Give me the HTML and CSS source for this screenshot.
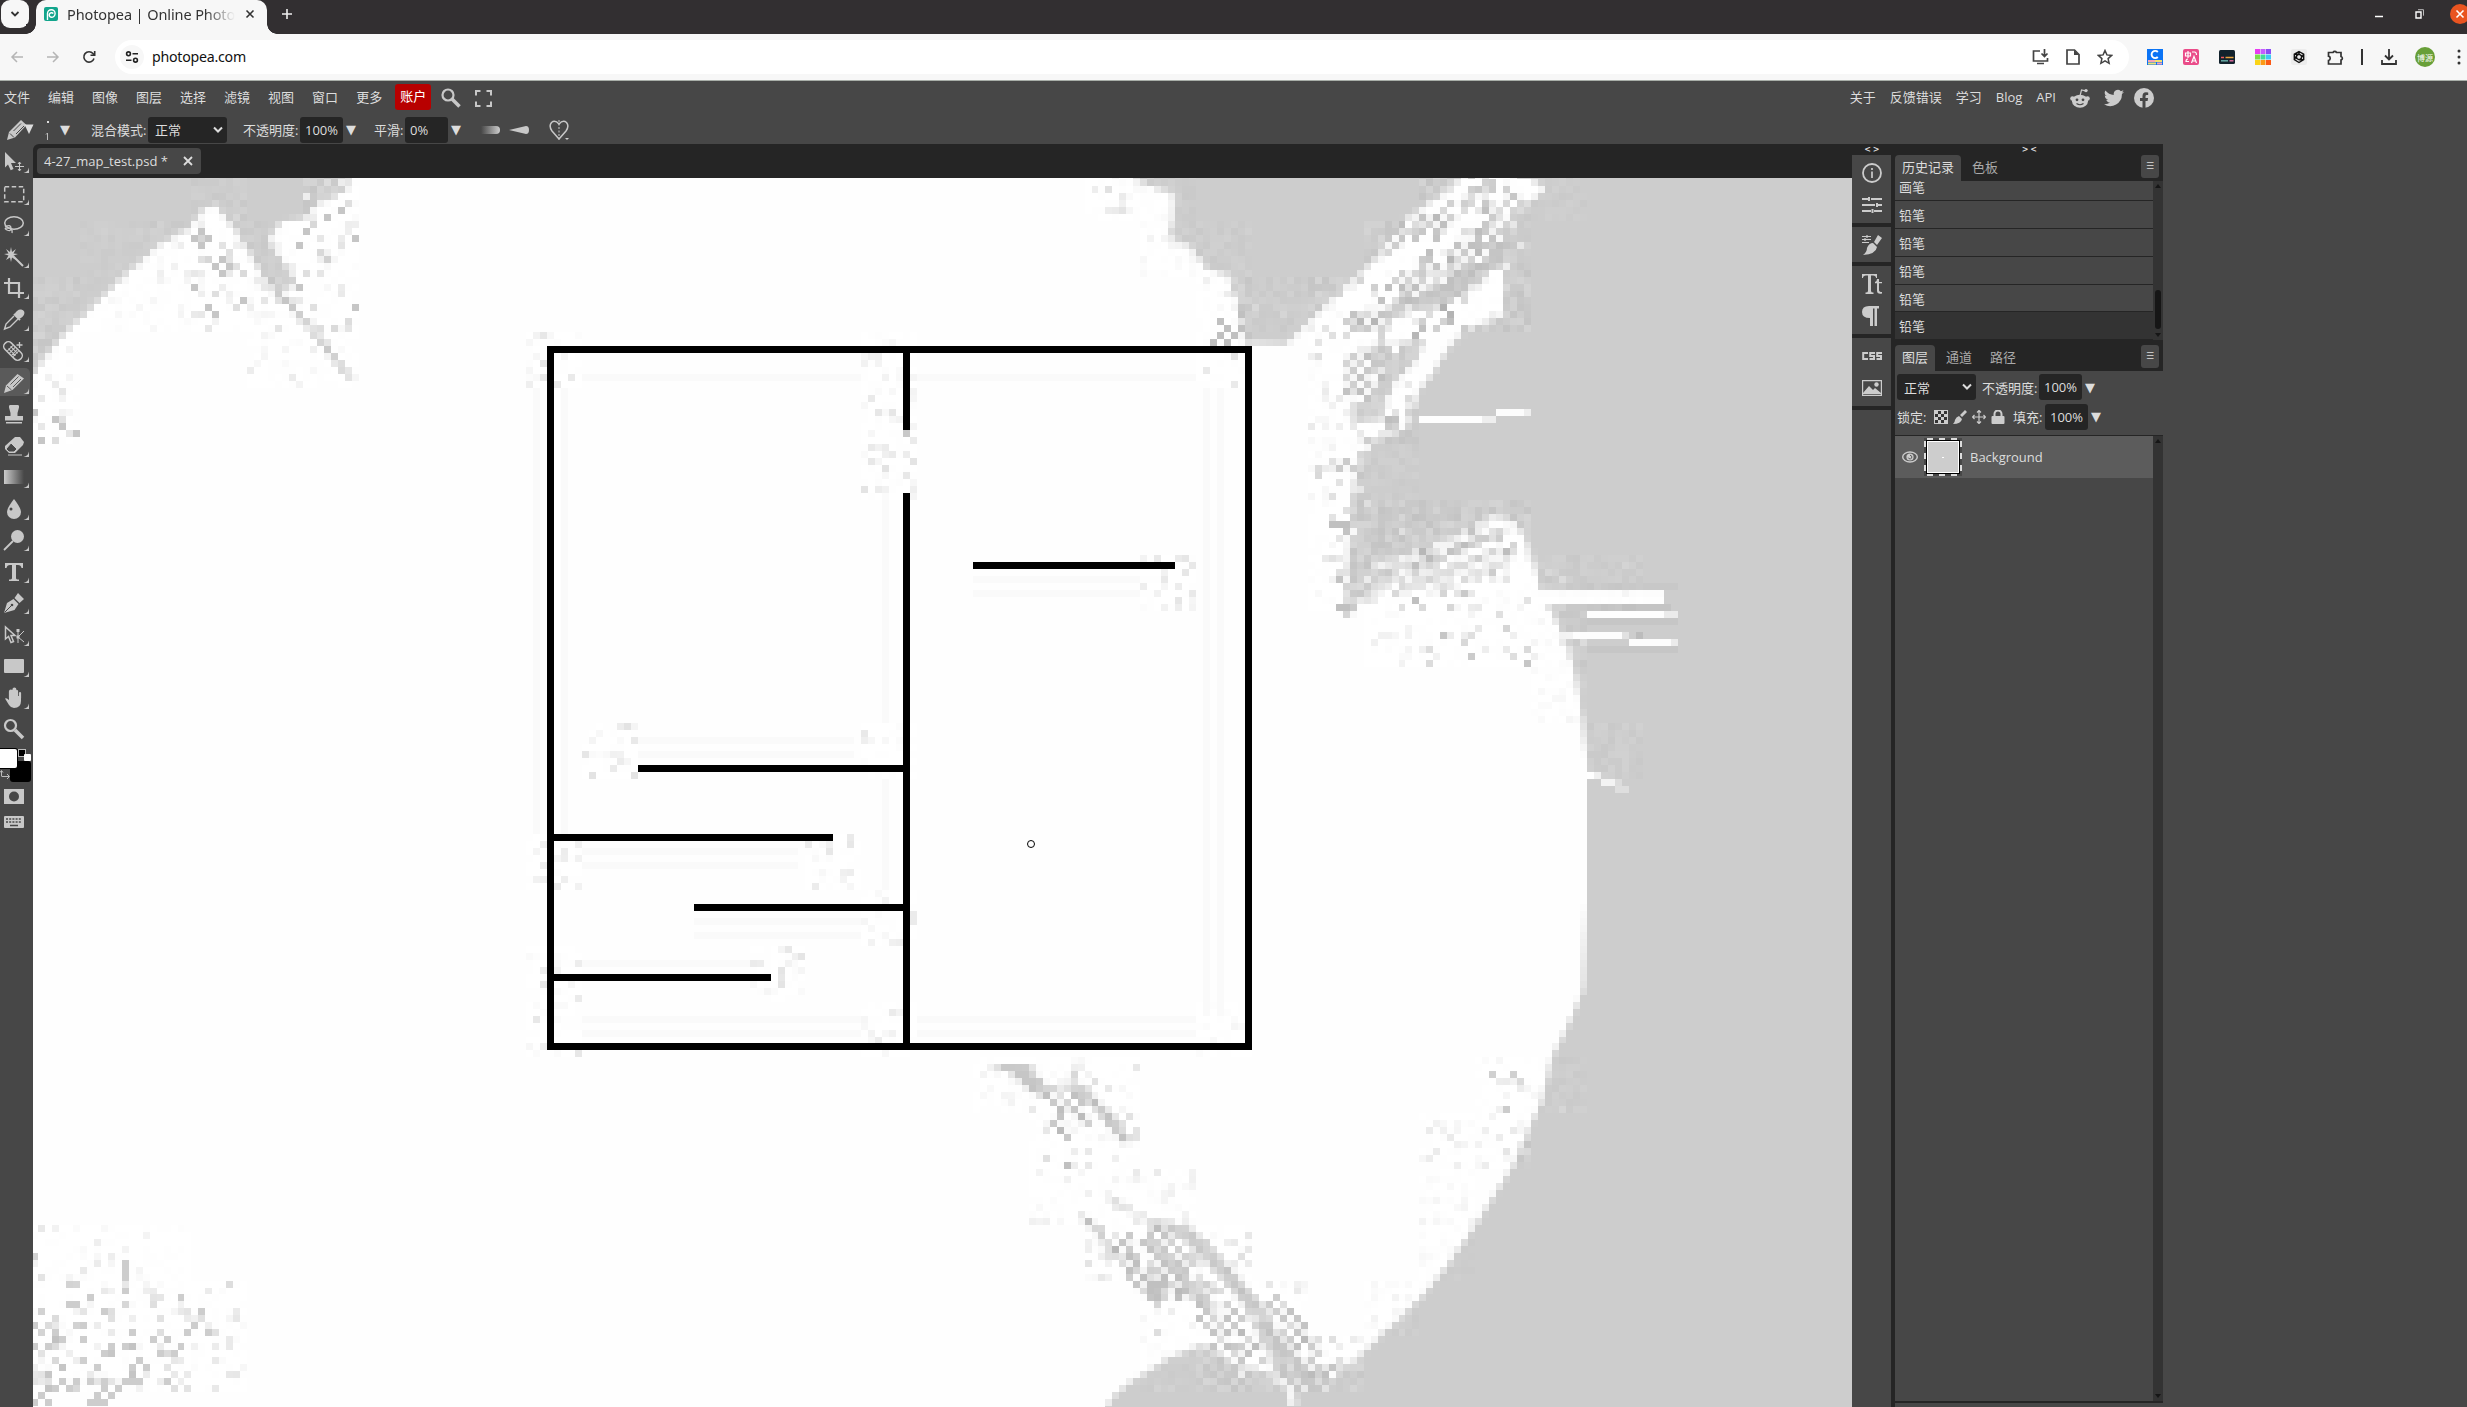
FILE: index.html
```html
<!DOCTYPE html>
<html lang="zh">
<head>
<meta charset="utf-8">
<title>Photopea | Online Photo Editor</title>
<link rel="stylesheet" href="styles.css">
</head>
<body>
<header class="tabstrip">
  <div class="tabsearch"><svg width="10" height="8" viewBox="0 0 10 8"><path d="M1.5 2l3.5 3.5L8.500 2" fill="none" stroke="#333" stroke-width="1.8"/></svg></div>
  <div class="browsertab">
    <svg class="favicon" width="14" height="14" viewBox="0 0 14 14"><rect width="14" height="14" rx="2" fill="#12a58c"/><path d="M3.500 13V6.500a3.800 3.800 0 1 1 3.800 3.800 2.300 2.300 0 1 1 2-3.800" fill="none" stroke="#fff" stroke-width="1.400"/></svg>
    <span class="tabtitle">Photopea | Online Photo Editor</span>
    <svg width="10" height="10" viewBox="0 0 10 10"><path d="M1.500 1.500l7 7M8.500 1.500l-7 7" stroke="#333" stroke-width="1.600"/></svg>
  </div>
  <svg class="newtab" width="12" height="12" viewBox="0 0 12 12"><path d="M6 1v10M1 6h10" stroke="#eee" stroke-width="1.600"/></svg>
  <div class="winbtns">
    <svg width="8" height="16" viewBox="0 0 8 16"><path d="M0 10.500h8" stroke="#fff" stroke-width="1.500"/></svg>
    <svg width="10" height="10" viewBox="0 0 10 10"><path d="M1 3h5v6H1z" fill="none" stroke="#fff" stroke-width="1.400"/><path d="M3 .7h5.500v6" fill="none" stroke="#bbb"/></svg>
    <span class="close"><svg width="20" height="20" viewBox="0 0 20 20"><circle cx="10" cy="10" r="10" fill="#e95420"/><path d="M6.500 6.500l7 7m0-7l-7 7" stroke="#fff" stroke-width="1.600"/></svg></span>
  </div>
</header>
<div class="toolbar">
  <svg width="14" height="14" viewBox="0 0 14 14"><path d="M13 7H2M7 2L2 7l5 5" fill="none" stroke="#b5b5b5" stroke-width="1.500"/></svg>
  <svg width="14" height="14" viewBox="0 0 14 14"><path d="M1 7h11M7 2l5 5-5 5" fill="none" stroke="#b5b5b5" stroke-width="1.500"/></svg>
  <svg width="14" height="14" viewBox="0 0 14 14"><path d="M12 8.500A5.200 5.200 0 1 1 11 3.500l1.500 1.500M12.700 1v4.300H8.500" fill="none" stroke="#333" stroke-width="1.600"/></svg>
  <div class="omnibox">
    <span class="site"><svg width="14" height="14" viewBox="0 0 14 14"><g fill="none" stroke="#222" stroke-width="1.600"><circle cx="3.500" cy="3.800" r="1.900"/><path d="M7.500 3.800H13M1 10.200h5.500"/><circle cx="10.500" cy="10.200" r="1.900"/></g></svg></span>
    <span class="url">photopea.com</span>
    <div class="omniactions">
      <svg width="17" height="16" viewBox="0 0 17 16"><path d="M8 2H1.500v10h14V9M5 14.500h7M12.500 0v7M9.500 4.500l3 3 3-3" fill="none" stroke="#444" stroke-width="1.700"/></svg>
      <svg width="14" height="16" viewBox="0 0 14 16"><path d="M1 1h7.500L13 5.500V15H1z" fill="none" stroke="#444" stroke-width="1.700"/><path d="M8 1v5h5z" fill="#444"/></svg>
      <svg width="16" height="16" viewBox="0 0 16 16"><path d="M8 1.500l1.900 4.400 4.800.5-3.600 3.200 1 4.700L8 11.800l-4.100 2.500 1-4.700L1.300 6.400l4.800-.5z" fill="none" stroke="#444" stroke-width="1.500"/></svg>
    </div>
  </div>
  <div class="exts">
    <svg width="16" height="16" viewBox="0 0 16 16"><rect width="16" height="16" fill="#0b74f5"/><path d="M10.800 3A3.600 3.600 0 1 0 10.800 8" fill="none" stroke="#fff" stroke-width="1.900"/><path d="M1 12h7M10 14.500h5" stroke="#f7a3b5" stroke-width="2"/><path d="M8 12h7M1 14.500h8" stroke="#f0e070" stroke-width="2"/></svg>
    <svg width="16" height="16" viewBox="0 0 16 16"><rect width="16" height="16" rx="2" fill="#ea4c89"/><path d="M2.500 4h5v3h-5zM5 2v7M9 3h2.500q2 0 2 3M5 10q-2 0-2 2.500h3M8.500 14l2.500-6.500L13.500 14M9.500 12h3" fill="none" stroke="#fff" stroke-width="1.200"/></svg>
    <svg width="16" height="16" viewBox="0 0 16 16"><rect y="1" width="16" height="14" rx="1.500" fill="#12222c"/><path d="M2 8.500h3" stroke="#ef5a5a" stroke-width="1.500"/><path d="M6.500 8.500h8" stroke="#e8a33d" stroke-width="1.500"/><path d="M2 11.800h7" stroke="#66a9a4" stroke-width="1.500"/><path d="M10.500 11.800h4" stroke="#d86a9c" stroke-width="1.500"/></svg>
    <svg width="16" height="16" viewBox="0 0 16 16"><path fill="#e83cf0" d="M0 0h5v5H0z"/><path fill="#c45cff" d="M5.500 0h5v5h-5z"/><path fill="#8a4cf5" d="M11 0h5v5h-5z"/><path fill="#7be04a" d="M0 5.500h5v5H0z"/><path fill="#3fdc9a" d="M5.500 5.500h5v5h-5z"/><path fill="#3fc8f5" d="M11 5.500h5v5h-5z"/><path fill="#fbd416" d="M0 11h5v5H0z"/><path fill="#fb9a16" d="M5.500 11h5v5h-5z"/><path fill="#fb5a16" d="M11 11h5v5h-5z"/></svg>
    <svg width="16" height="16" viewBox="0 0 16 16"><rect width="16" height="16" rx="2" fill="#ececec"/><path d="M8 2.500l4.700 2.700v5.500L8 13.500l-4.700-2.800V5.200zM8 5.200l2.400 1.400v2.800L8 10.800 5.600 9.400V6.600zM8 2.500v3M12.700 5.200L10 9.500M12.700 10.700H8M3.300 5.200H8M3.300 10.700l2.400-4" fill="none" stroke="#111" stroke-width="1.400"/></svg>
    <svg width="17" height="17" viewBox="0 0 17 17"><path d="M1.500 3.500H6a2 2 0 0 1 3.500 0H14V7.500a1.800 1.800 0 0 1 0 3.500V15H1.500v-3.500a2.200 2.200 0 0 0 0-4.300z" fill="none" stroke="#333" stroke-width="1.700"/></svg>
    <i class="bar"></i>
    <svg width="16" height="16" viewBox="0 0 16 16"><path d="M8 0v10M4 6.500l4 4 4-4M1 11v4h14v-4" fill="none" stroke="#333" stroke-width="1.800"/></svg>
    <span class="avatar">博源</span>
    <svg width="4" height="16" viewBox="0 0 4 16"><g fill="#333"><circle cx="2" cy="2" r="1.500"/><circle cx="2" cy="8" r="1.500"/><circle cx="2" cy="14" r="1.500"/></g></svg>
  </div>
</div>
<main class="app">
  <div class="shell">
    <nav class="menubar">
      <div class="menus"><span>文件</span><span>编辑</span><span>图像</span><span>图层</span><span>选择</span><span>滤镜</span><span>视图</span><span>窗口</span><span>更多</span></div>
      <span class="account">账户</span>
      <svg class="msearch" width="20" height="20" viewBox="0 0 20 20"><circle cx="7" cy="7" r="5.500" fill="none" stroke="#c8c8c8" stroke-width="2.200"/><path d="M11 11l7.500 7.500" stroke="#c8c8c8" stroke-width="3.500"/></svg>
      <svg class="mfull" width="17" height="17" viewBox="0 0 17 17"><path d="M1 5.500V1h4.500M11.500 1H16v4.500M16 11.500V16h-4.500M5.500 16H1v-4.500" fill="none" stroke="#c8c8c8" stroke-width="2"/></svg>
      <div class="links"><span>关于</span><span>反馈错误</span><span>学习</span><span>Blog</span><span>API</span>
        <svg class="reddit" width="20" height="20" viewBox="0 0 20 20"><path d="M10 8l1.500-6 4 .8" fill="none" stroke="#ccc" stroke-width="1.200"/><circle cx="16" cy="2.600" r="1.700" fill="#ccc"/><circle cx="2.500" cy="10.500" r="2.300" fill="#ccc"/><circle cx="17.500" cy="10.500" r="2.300" fill="#ccc"/><ellipse cx="10" cy="13.200" rx="8" ry="6.500" fill="#ccc"/><circle cx="7" cy="11.800" r="1.400" fill="#474747"/><circle cx="13" cy="11.800" r="1.400" fill="#474747"/><path d="M6.500 15.500q3.500 2.500 7 0" stroke="#474747" stroke-width="1.200" fill="none"/></svg>
        <svg width="20" height="20" viewBox="0 0 24 24"><path fill="#ccc" d="M24 4.600a10 10 0 0 1-2.800.8 5 5 0 0 0 2.100-2.700c-1 .5-2 1-3.100 1.200a4.900 4.900 0 0 0-8.400 4.500A14 14 0 0 1 1.700 3.100a4.900 4.900 0 0 0 1.500 6.600 5 5 0 0 1-2.200-.6 4.900 4.900 0 0 0 3.900 4.800 5 5 0 0 1-2.200.1 4.900 4.900 0 0 0 4.600 3.400A10 10 0 0 1 0 19.500a14 14 0 0 0 21.500-12.400A10 10 0 0 0 24 4.600z"/></svg>
        <svg class="fb" width="20" height="20" viewBox="0 0 20 20"><circle cx="10" cy="10" r="10" fill="#ccc"/><path d="M8.500 20v-7H6v-3h2.500V8q0-3.800 3.500-3.800l2.200.2V7h-1.400q-1.300 0-1.300 1.400V10h2.600l-.5 3h-2.100v7z" fill="#474747"/></svg>
      </div>
    </nav>
    <div class="options">
      <svg class="optpen" width="26" height="20" viewBox="0 0 26 20"><path d="M0 20l2-8L14 0l5.500 5L8 17.500z" fill="#c8c8c8"/><path d="M3 13.500l4 4M6.500 11L14 3.500M9 14L17 6" stroke="#474747"/><path d="M17.500 4.500H26.500L22 14z" fill="#ddd"/></svg>
      <svg class="optsize" width="10" height="20" viewBox="0 0 10 20"><rect x="4" y="1" width="2" height="2" fill="#ddd"/><path d="M3 14.500l1.500-1.500v7" stroke="#bbb" fill="none"/></svg>
      <span class="dd d1">▼</span>
      <span class="lbl l1">混合模式:</span><span class="sel">正常<svg width="10" height="8" viewBox="0 0 10 8"><path d="M1 1.500l4 4 4-4" fill="none" stroke="#ddd" stroke-width="2"/></svg></span>
      <span class="lbl l2">不透明度:</span><span class="inp">100%</span><span class="dd">▼</span>
      <span class="lbl l3">平滑:</span><span class="inp">0%</span><span class="dd">▼</span>
      <i class="fade"></i>
      <svg class="wedge" width="20" height="8" viewBox="0 0 20 8"><path d="M0 4L17 0q3 0 3 4t-3 4z" fill="#c8c8c8"/></svg>
      <svg class="heart" width="20" height="20" viewBox="0 0 20 20"><path d="M10 4Q6-.5 2.500 2.500-.5 6 3 11l7 8 7-8q3.500-5 .5-8.500Q14-.5 10 4z" fill="none" stroke="#c8c8c8" stroke-width="1.500"/><path d="M10 0v20" stroke="#c8c8c8" stroke-dasharray="2 1.500"/><path d="M16 18h4l-2 2z" fill="#ccc"/></svg>
    </div>
    <div class="work">
      <aside class="tools">
        <svg class="tool"><path d="M5 0l11 11h-5l2.500 6-2.800 1.200L8 12.500l-3 3z" fill="#c8c8c8"/><path d="M19.500 10v9M15 14.500h9M18 12l1.500-2 1.500 2M18 17l1.500 2 1.500-2" stroke="#c8c8c8" fill="none"/></svg>
        <svg class="tool"><rect x="4.700" y="2.700" width="19" height="15" fill="none" stroke="#c8c8c8" stroke-width="1.500" stroke-dasharray="4.500 2.500"/></svg>
        <svg class="tool"><ellipse cx="14" cy="8" rx="9.300" ry="6.200" fill="none" stroke="#c8c8c8" stroke-width="1.500"/><path d="M5 12q6-3 6 1t-4 2 1-2 4 5" fill="none" stroke="#c8c8c8" stroke-width="1.300"/></svg>
        <svg class="tool"><path d="M13 9l10 10" stroke="#c8c8c8" stroke-width="2"/><path d="M11 0l1 5 4-3-2.500 4.500L18 7l-4.500 1.500L16 13l-4-2.500L11 15l-1-4.500L6 13l2.500-4.500L4 7l4.500-.5L6 2l4 3z" fill="#c8c8c8"/></svg>
        <svg class="tool"><path d="M9 0v15h15M4 5h15v15" fill="none" stroke="#c8c8c8" stroke-width="2.200"/></svg>
        <svg class="tool"><path d="M14 4l6 6M15.500 4.500Q18 0 21 .5q3.500 1 2 4-1 2-4 3.500z" stroke="#c8c8c8" stroke-width="2" fill="#c8c8c8"/><path d="M14 6L6 14l-1.500 5L10 17l8-8" fill="none" stroke="#c8c8c8" stroke-width="1.400"/></svg>
        <svg class="tool"><g transform="rotate(45 13 10)"><rect x="2" y="5.500" width="22" height="9" rx="4" fill="none" stroke="#c8c8c8" stroke-width="1.500"/><path d="M9 6v8M12 6v8M15 6v8M17 6v8M8 8.500h10M8 11.500h10" stroke="#c8c8c8"/></g><path d="M19.500 1v6M16.500 4h6" stroke="#c8c8c8" stroke-width="1.300"/></svg>
        <svg class="tool on"><path d="M4 20l2-7.500L17.500 1 24 5.500 12.500 17z" fill="#c8c8c8"/><path d="M7 13l4.500 4M10.500 11.500l8-8M13 14l8-8" stroke="#5a5a5a"/></svg>
        <svg class="tool plain"><path d="M10 1h8q1.500 0 1 2.500L17.500 9v3H23v4.500H5V12h5.500V9L9 3.500Q8.500 1 10 1zM6 18h16v1.400H6z" fill="#c8c8c8"/></svg>
        <svg class="tool"><path d="M15 1h5l4 5-1 3-8 8H9l-4-4V10z" fill="#c8c8c8"/><path d="M11 7l6 6-3 3H9l-3-3z" fill="#474747" stroke="#c8c8c8"/><path d="M8 19h14" stroke="#c8c8c8"/></svg>
        <svg class="tool"><defs><linearGradient id="g"><stop stop-color="#ccc"/><stop offset="1" stop-color="#474747"/></linearGradient></defs><rect x="4" y="3" width="20" height="14" fill="url(#g)"/></svg>
        <svg class="tool"><path d="M14 0q7 9 7 13a7 7 0 0 1-14 0q0-4 7-13z" fill="#c8c8c8"/><circle cx="11" cy="10" r="1.500" fill="#474747"/></svg>
        <svg class="tool"><circle cx="17.500" cy="6.500" r="6.500" fill="#c8c8c8"/><path d="M13 11l-9 9" stroke="#c8c8c8" stroke-width="1.800"/></svg>
        <svg class="tool"><path d="M5 1h18v5h-1.500Q21 3 18 3h-2v13q0 1.500 3 1.500V19H9v-1.500q3 0 3-1.500V3h-2Q7 3 6.500 6H5z" fill="#c8c8c8"/></svg>
        <svg class="tool"><path d="M18 0l6 6-4.500 4L14.500 5zM13.500 6l5 5-4 6L4 20l3-10z" fill="#c8c8c8"/><path d="M4.500 19.500l7-7" stroke="#474747"/><circle cx="12" cy="12" r="1.300" fill="#474747"/></svg>
        <svg class="tool"><path d="M5.500 2v12l3-2.500 2.500 6 2.500-1-2.500-6h4z" fill="none" stroke="#c8c8c8" stroke-width="1.500"/><path d="M18 5v13M18 12l6-6M18 12l6 5" stroke="#c8c8c8"/><path d="M16.500 4h3v3h-3zM16.500 10.500h3v3h-3z" fill="#c8c8c8"/></svg>
        <svg class="tool"><rect x="4" y="3" width="20" height="14" rx="1" fill="#c8c8c8"/></svg>
        <svg class="tool"><path d="M10 10V3.500q0-1 .9-1t.9 1V9M13.500 9V1.500q0-1 .9-1t.9 1V9M17 9V3M20 10V5" stroke="#c8c8c8" stroke-width="2.200" stroke-linecap="round"/><path d="M9 8h12v5q0 7-7 7-3 0-5-3l-4-6.500q1.500-1.200 4 1.500z" fill="#c8c8c8"/></svg>
        <svg class="tool plain"><circle cx="10.500" cy="6.500" r="5.500" fill="none" stroke="#c8c8c8" stroke-width="2.200"/><path d="M15 11l8 8" stroke="#c8c8c8" stroke-width="3.500"/></svg>
        <svg class="colors" width="33" height="38" viewBox="0 0 33 38"><rect x="10" y="15" width="21" height="21" rx="3"/><rect x="-4" y="2" width="22" height="21" rx="3"/><rect x="-3" y="3" width="20" height="19" rx="2" fill="#fff"/><rect x="18.500" y="3.500" width="7" height="7" stroke="#bbb"/><rect x="24" y="8" width="7" height="7" rx="1" fill="#fff"/><path d="M1.500 30v-5M0 26.500l1.500-2 1.500 2M1.500 30.500H9M7 28l2.500 2.500L7 33" stroke="#bbb" fill="none"/></svg>
        <svg class="mask" width="20" height="15" viewBox="0 0 20 15"><rect width="20" height="15" fill="#c8c8c8"/><circle cx="10" cy="7.500" r="5" fill="#474747"/></svg>
        <svg class="keys" width="20" height="12" viewBox="0 0 20 12"><rect width="20" height="12" rx="1" fill="#c8c8c8"/><path d="M2 3h16M2 6h16" stroke="#474747" stroke-width="1.600" stroke-dasharray="2 1.200"/><path d="M6 9.500h8" stroke="#474747" stroke-width="1.500"/></svg>
      </aside>
      <section class="doc">
        <div class="doctabs"><span class="doctab">4-27_map_test.psd *<svg width="10" height="10" viewBox="0 0 10 10"><path d="M1 1l8 8M9 1L1 9" stroke="#ddd" stroke-width="1.800"/></svg></span></div>
        <div class="view"><canvas id="map" width="262" height="178"></canvas><i class="brush"></i></div>
      </section>
      <aside class="strip">
        <div class="collapse">&lt;&nbsp;&gt;</div>
        <div class="group"><svg viewBox="0 0 20 20"><circle cx="10" cy="10" r="9" fill="none" stroke="#ccc" stroke-width="1.800"/><path d="M10 8.500V15M10 5v2" stroke="#ccc" stroke-width="1.700"/></svg><svg viewBox="0 0 20 20"><path d="M0 4h6M9 4h11M0 10h13M16 10h4M0 16h9M12 16h8" stroke="#ccc" stroke-width="2"/><path d="M7 2v4M15 8v4M10.500 14v4" stroke="#ccc" stroke-width="2"/></svg></div>
        <div class="group one"><svg viewBox="0 0 20 20"><path d="M0 1.500h9M0 4.500h9M0 7.500h7M5 0v3M3 3v3" stroke="#ccc" stroke-width="1.200"/><path d="M16 0l4 3-5 7-3-3zM11 8l4 4q-1 7-14 8 4-3 4-7 2-5 6-5z" fill="#ccc"/></svg></div>
        <div class="group"><svg viewBox="0 0 20 20"><path d="M0 0h15v4h-1q0-2.500-3-2.500H9V17q0 1.500 2.500 1.500V20h-8v-1.500Q6 18.500 6 17V1.500H4Q1 1.500 1 4H0zM15 5h2v3h3v1.200h-3V16q0 2 3 2v1.500q-5 1-5-3V9.200h-2V8q2-.5 2-3z" fill="#ccc"/></svg><svg viewBox="0 0 20 20"><path d="M7 0h10v2.500h-2V20h-2.500V2.500H11V20H8v-8Q0 12 0 6t7-6z" fill="#ccc"/></svg></div>
        <div class="group"><svg viewBox="0 0 20 20"><path d="M6 7H1.200v6H6M13 7H8.200v3H12v3H7.500M20 7h-4.800v3H19v3h-4.500" fill="none" stroke="#ccc" stroke-width="2"/></svg><svg viewBox="0 0 20 20"><path d="M.6 2.600h18.800v14.800H.6z" fill="none" stroke="#ccc" stroke-width="1.200"/><path d="M1 15l6-7 4 4 2-2 6 5v1H1z" fill="#ccc"/><circle cx="14.500" cy="6.500" r="2.200" fill="#ccc"/></svg></div>
        <div class="group rest"></div>
      </aside>
      <aside class="panels">
        <div class="collapse">&gt;&nbsp;&lt;</div>
        <div class="ptabs"><span class="ptab act">历史记录</span><span class="ptab">色板</span><i class="burger">☰</i></div>
        <div class="history">
          <ul><li>画笔</li><li>铅笔</li><li>铅笔</li><li>铅笔</li><li>铅笔</li><li class="cur">铅笔</li></ul>
          <div class="sb"><b class="up"></b><b class="thumb"></b><b class="down"></b></div>
        </div>
        <div class="ptabs second"><span class="ptab act">图层</span><span class="ptab">通道</span><span class="ptab">路径</span><i class="burger">☰</i></div>
        <div class="lrow"><span class="sel">正常<svg width="10" height="8" viewBox="0 0 10 8"><path d="M1 1.500l4 4 4-4" fill="none" stroke="#ddd" stroke-width="2"/></svg></span><span class="lbl">不透明度:</span><span class="inp">100%</span><span class="dd">▼</span></div>
        <div class="lrow locks"><span class="lbl">锁定:</span>
          <svg width="14" height="14" viewBox="0 0 14 14"><path d="M0 0h14v14H0z" fill="#ccc"/><path d="M4 1h3v3H4zM10 1h3v3h-3zM1 4h3v3H1zM7 4h3v3H7zM4 7h3v3H4zM10 7h3v3h-3zM1 10h3v3H1zM7 10h3v3H7z" fill="#333"/></svg>
          <svg width="14" height="14" viewBox="0 0 14 14"><path d="M12 0l2 2-5 5-2-2zM6 6l3 3q-1 5-9 5 2-2 2-4 1-3 4-4z" fill="#ccc"/></svg>
          <svg width="14" height="14" viewBox="0 0 14 14"><path d="M7 1v12M1 7h12M5 2.500L7 .5l2 2M5 11.500l2 2 2-2M2.500 5L.5 7l2 2M11.500 5l2 2-2 2" fill="none" stroke="#ccc" stroke-width="1.200"/></svg>
          <svg width="14" height="14" viewBox="0 0 14 14"><path d="M3.500 7V4a3.500 3.500 0 0 1 7 0v3" fill="none" stroke="#ccc" stroke-width="2"/><rect x=".5" y="6" width="13" height="8" rx="1" fill="#ccc"/></svg>
          <span class="lbl fill">填充:</span><span class="inp">100%</span><span class="dd">▼</span></div>
        <div class="layers">
          <div class="llist"><div class="layer">
            <svg width="16" height="12" viewBox="0 0 16 12"><ellipse cx="8" cy="6" rx="7.300" ry="5" fill="none" stroke="#ccc" stroke-width="1.400"/><circle cx="8" cy="6" r="3.600" fill="#ccc"/><path d="M8 4.300a1.800 1.800 0 1 1-1.700 2.300" fill="none" stroke="#5c5c5c"/></svg>
            <span class="thumbwrap"><i></i></span><span>Background</span></div></div>
          <div class="sb"><b class="up"></b><b class="down"></b></div>
        </div>
        <div class="pfoot"></div>
      </aside>
    </div>
  </div>
</main>
<script src="map.js"></script>
</body>
</html>
```
FILE: styles.css
```css
*{box-sizing:border-box}
body{margin:0;height:1407px;overflow:hidden;display:flex;flex-direction:column;background:#474747;font:13px "Open Sans","Noto Sans CJK SC",sans-serif;color:#ddd}
svg{display:block;flex:none}
i{font-style:normal}
.tabstrip{height:34px;background:#322f31;display:flex;align-items:flex-start;flex:none}
.tabsearch{width:28px;height:28px;margin-left:1px;background:#f7f7f7;border-radius:9px;display:flex;align-items:center;justify-content:center}
.browsertab{margin-left:7px;width:231px;height:34px;background:#f7f7f7;border-radius:10px 10px 0 0;display:flex;align-items:center;padding:0 10px 6px 8px;position:relative}
.browsertab::before,.browsertab::after{content:"";position:absolute;bottom:0;width:10px;height:10px}
.browsertab::before{left:-10px;background:radial-gradient(circle at 0 0,#322f31 9.5px,#f7f7f7 10px)}
.browsertab::after{right:-10px;background:radial-gradient(circle at 100% 0,#322f31 9.5px,#f7f7f7 10px)}
.tabtitle{margin:-1px 10px 0 9px;width:168px;font:14.500px "Noto Sans",sans-serif;letter-spacing:-.1px;color:#333;white-space:nowrap;overflow:hidden;mask-image:linear-gradient(90deg,#000 82%,transparent)}
.newtab{margin:8px 0 0 14px}
.winbtns{margin-left:auto;display:flex;align-items:center;height:28px}
.winbtns>:nth-child(2){margin-left:32px}
.close{margin-left:25px;width:17px;overflow:hidden}
.toolbar{height:47px;flex:none;background:#f7f7f7;border-bottom:1px solid #a9afa9;display:flex;align-items:center;padding:0 4px 0 10px}
.toolbar>svg{margin-right:22px}
.omnibox{margin-left:-3px;width:2014px;height:34px;border-radius:17px;background:#fff;display:flex;align-items:center;padding:0 16px 0 5px}
.site{width:24px;height:24px;border-radius:12px;background:#f7f7f7;display:grid;place-items:center}
.url{margin:-2px 0 0 8px;font:14.200px "Noto Sans",sans-serif;letter-spacing:-.25px;color:#111}
.omniactions{margin-left:auto;display:flex;gap:17px;align-items:center}
.exts{display:flex;align-items:center;gap:20px;margin-left:18px}
.exts .bar{width:2px;height:16px;background:#333;margin:0 -2px 0 -3px}
.avatar{width:20px;height:20px;border-radius:10px;background:#689f38;color:#fff;font-size:8px;display:grid;place-items:center;margin:0 2px 0 -2px}
.app{flex:1;min-height:0;display:flex}
.shell{width:2163px;display:flex;flex-direction:column}
.menubar{height:34px;display:flex;align-items:center;padding-left:4px;flex:none}
.menus{display:flex;gap:18px;margin-top:-2px}
.menubar span{line-height:20px}
.account{margin:-2px 0 0 13px;width:36px;height:26px;line-height:25px!important;text-align:center;background:#b80000;border-radius:3px;color:#fff}
.msearch{margin-left:10px}
.mfull{margin-left:14px}
.links{margin-left:auto;display:flex;align-items:center;gap:14px;padding-right:9px}
.links span{margin-top:-2px}
.fb{margin-left:-4px}
.options{height:29px;display:flex;align-items:center;padding-left:7px;flex:none}
.optpen{overflow:visible}
.optsize{margin-left:10px}
.lbl{white-space:nowrap}
.dd{font:13px "DejaVu Sans",sans-serif;color:#ddd;width:10px;margin-left:3px}
.d1{margin-left:7px}
.l1{margin-left:21px;width:57px}
.sel{width:79px;height:26px;background:#252525;border-radius:3px;display:flex;align-items:center;justify-content:space-between;padding:0 4px 0 7px}
.l2{margin-left:16px;width:57px}
.l3{margin-left:18px;width:31px}
.inp{width:43px;height:26px;background:#252525;border-radius:3px;line-height:26px;padding-left:5px}
.fade{width:19px;height:8px;margin-left:20px;border-radius:0 4px 4px 0;background:linear-gradient(90deg,#474747,#ccc)}
.wedge{margin-left:9px}
.heart{margin-left:20px}
.work{flex:1;display:flex;min-height:0}
.tools{width:33px;background:#474747;padding-top:3px}
.tool{width:30px;height:28px;margin-bottom:3.500px;padding:5px 0 0;overflow:visible}
.tool.on{background:#5a5a5a;border-radius:0 5px 5px 0}
.colors{margin-top:1px}
.mask{margin:5px 0 0 4px}
.keys{margin:12px 0 0 4px}
.doc{width:1819px;display:flex;flex-direction:column}
.doctabs{height:34px;flex:none;background:#252525;padding:4px;border-radius:6px 0 0 0}
.doctab{display:flex;width:164px;height:26px;background:#474747;border-radius:4px;align-items:center;justify-content:space-between;padding:0 8px 1px 7px}
.view{flex:1;position:relative;overflow:hidden;background:#fff}
.view canvas{position:absolute;left:-2px;top:-6.500px;width:1827.700px;height:1241.700px;image-rendering:pixelated}
.brush{position:absolute;left:994px;top:662px;width:8px;height:8px;border:1px solid #000;border-radius:50%}
.strip{width:43px;background:#252525;display:flex;flex-direction:column;gap:4px;padding-right:4px}
.collapse{height:11px;font:bold 8px/11px "DejaVu Sans",sans-serif;text-align:center;color:#ddd;letter-spacing:-.5px}
.strip .collapse{margin-bottom:-4px}
.group{background:#474747;height:68px;display:flex;flex-direction:column;align-items:center;justify-content:space-around;padding:2px 0}
.group svg{width:20px;height:20px}
.one{height:35px}
.rest{flex:1;height:auto}
.panels{width:268px;display:flex;flex-direction:column}
.panels .collapse{background:#252525;flex:none}
.ptabs{height:26px;flex:none;background:#252525;display:flex;align-items:center}
.ptab{height:26px;line-height:24px;padding:0 7px;margin-right:4px;color:#aaa}
.act{background:#474747;color:#ddd;border-radius:4px 4px 0 0}
.burger{margin:-3px 4px 0 auto;width:18px;height:23px;border-radius:3px;background:#474747;text-align:center;font:9px/23px "DejaVu Sans",sans-serif}
.history{height:159px;flex:none;display:flex;overflow:hidden}
.history ul{margin:-8px 0 0;padding:0;list-style:none;width:258px}
.history li{height:27.900px;border-bottom:1px solid #252525;padding-left:4px;line-height:29px}
.cur{background:#333}
.sb{width:10px;background:#333;display:flex;flex-direction:column;align-items:center;padding:3px 0}
.up{border:3px solid transparent;border-top:0;border-bottom:4px solid #161616}
.down{border:3px solid transparent;border-bottom:0;border-top:4px solid #161616;margin-top:auto}
.thumb{width:6px;height:39px;background:#161616;border-radius:3px;margin-top:102px}
.second{height:31px;padding-top:5px}
.lrow{height:29px;flex:none;display:flex;align-items:center;padding:3px 0 0 2px}
.lrow .lbl{margin-left:6px;width:57px}
.lrow .dd{margin-left:3px}
.locks{height:35px;padding-bottom:5px}
.locks .lbl{margin-left:0;width:37px}
.locks svg{margin-right:5px}
.locks .fill{width:32px;margin-left:3px}
.layers{flex:1;min-height:0;display:flex;border-top:1px solid #252525}
.llist{width:258px}
.layer{height:42px;background:#5c5c5c;display:flex;align-items:center;padding-left:7px}
.thumbwrap{width:38px;height:38px;margin:0 8px 0 6px;background:repeating-conic-gradient(#ddd 0 25%,#474747 0 50%) 3px 3px/12px 12px;display:grid;place-items:center}
.thumbwrap i{width:34px;height:34px;border:1px solid #000;background:linear-gradient(#fff,#fff) 50% 50%/2px 1px no-repeat #cdcdcd;box-shadow:inset 0 0 0 1px #fff}
.pfoot{height:6px;border-top:2px solid #252525}
```
FILE: map.js
```js
// Low resolution floor map, magnified by the editor's zoom level.
const cv = document.getElementById('map');
const c = cv.getContext('2d');
const S = 6.976, OX = 30.4, OY = 171.8;
const GREY = '#cdcdcd', WHITE = '#fefefe';
c.fillStyle = WHITE;
c.fillRect(0, 0, 262, 178);
const cx = x => (x - OX) / S, cy = y => (y - OY) / S;
function trace(p) {
  c.beginPath();
  for (let i = 0; i < p.length; i += 2) c.lineTo(cx(p[i]), cy(p[i + 1]));
}
function poly(col, p) { c.fillStyle = col; trace(p); c.fill(); }
function line(col, w, p) { c.strokeStyle = col; c.lineWidth = w; trace(p); c.stroke(); }
let seed = 77;
const rnd = () => (seed = (seed * 16807) % 2147483647) / 2147483647;
// dithered strip: alternating cells along a polyline, n cells wide
function dither(n, x0, y0, x1, y1, odd = 0) {
  const a = cx(x0), b = cy(y0), e = cx(x1), f = cy(y1), len = Math.hypot(e - a, f - b);
  for (let y = Math.floor(Math.min(b, f)) - n; y <= Math.max(b, f) + n; y++)
    for (let x = Math.floor(Math.min(a, e)) - n; x <= Math.max(a, e) + n; x++) {
      const t = ((x - a) * (e - a) + (y - b) * (f - b)) / len / len;
      const dist = Math.abs((x - a) * (f - b) - (y - b) * (e - a)) / len;
      if (t < 0 || t > 1 || dist > n / 2 || rnd() > .85) continue;
      const on = (x + y + odd) & 1, v = on ? 188 + rnd() * 34 | 0 : 254 - rnd() * 12 | 0;
      c.fillStyle = `rgb(${v},${v},${v})`;
      c.fillRect(x, y, 1, 1);
    }
}

// unexplored areas
poly(GREY, [20,160, 350,160, 347,190, 318,203, 303,219, 282,221, 268,240, 278,256, 291,272, 296,286, 276,291, 265,280, 247,250, 230,222, 215,205, 203,209, 190,226, 155,246, 120,278, 90,310, 60,338, 33,374, 20,380]);
line('#c4c4c4', .9, [272,290, 290,305, 350,378]);
poly(GREY, [1133,160, 1135,180, 1172,192, 1174,212, 1168,236, 1190,246, 1205,268, 1228,275, 1233,300, 1243,325, 1243,343, 1285,345, 1312,318, 1345,286, 1365,268, 1382,250, 1400,222, 1440,196, 1478,160]);
poly(GREY, [1500,160, 1860,160, 1860,1420, 1100,1420, 1112,1397, 1128,1384, 1170,1358, 1202,1345, 1240,1366, 1290,1378, 1340,1368, 1363,1353, 1398,1320, 1419,1300, 1447,1265, 1475,1226, 1510,1170, 1520,1148, 1531,1122, 1540,1105, 1551,1058, 1560,1040, 1572,1015, 1582,990, 1586,900, 1586,756, 1579,700, 1572,665, 1565,640, 1550,612, 1540,590, 1530,550, 1516,522, 1495,515, 1345,590, 1350,500, 1358,462, 1378,432, 1384,400, 1380,300, 1480,245, 1530,190]);
poly(WHITE, [1345,290, 1480,178, 1530,178, 1545,190, 1525,205, 1480,242, 1440,262, 1400,292, 1390,310, 1440,306, 1480,285, 1492,262, 1503,265, 1503,316, 1466,328, 1448,348, 1433,372, 1418,392, 1405,428, 1376,438, 1330,420]);
poly('#c6c6c6', [1487,262, 1470,290, 1440,304, 1375,322, 1384,312, 1410,290, 1440,267, 1475,252]);
poly(GREY, [1378,347, 1425,340, 1415,362, 1396,380, 1384,400, 1380,422, 1350,422, 1352,400, 1370,392, 1352,378, 1352,354]);
poly(WHITE, [1350,392, 1385,366, 1382,380, 1352,404]);
dither(4, 1352, 350, 1352, 400);
dither(3, 1425, 225, 1490, 185);
dither(3, 1375, 245, 1425, 215);
dither(4, 1395, 285, 1495, 232, 1);
dither(3, 1480, 215, 1515, 190);
dither(3, 1380, 300, 1340, 330);
for (const [x, y, w, v] of [[1418,416,62,254],[1480,416,13,238],[1494,409,32,252],[1526,409,7,238],
  [1540,591,128,252],[1540,598,126,254],[1586,605,85,196],[1586,612,76,254],[1662,612,14,235],
  [1586,584,92,200],[1586,619,90,198],[1586,647,90,198],
  [1555,633,66,253],[1621,633,8,225],[1635,633,7,188],[1628,640,40,252],[1668,640,8,235],
  [1586,773,7,254],[1593,773,7,240],[1600,780,13,243],[1613,780,7,220],[1613,787,14,222]]) {
  c.fillStyle = `rgb(${v},${v},${v})`;
  c.fillRect(Math.round(cx(x)), Math.round(cy(y)), Math.max(1, Math.round(w / S)), 1);
}
poly(GREY, [1560,612, 1586,612, 1586,632, 1560,632]);

// scan streaks
poly('#c8c8c8', [985,1064, 1025,1064, 1045,1085, 1050,1100, 1030,1092, 1010,1074]);
dither(5, 1050, 1085, 1075, 1130);
dither(3, 1045, 1112, 1070, 1132, 1);
line('#c6c6c6', 1.3, [1072,1085, 1095,1105, 1128,1142]);
dither(5, 1120, 1235, 1160, 1300);
dither(5, 1140, 1225, 1190, 1290, 1);
dither(5, 1190, 1280, 1245, 1355);
dither(4, 1265, 1300, 1325, 1375);
poly('#cbcbcb', [1104,1198, 1118,1200, 1140,1216, 1165,1222, 1190,1228, 1208,1243, 1240,1280, 1265,1310, 1280,1340, 1310,1370, 1300,1400, 1275,1376, 1262,1345, 1240,1300, 1205,1262, 1172,1232, 1140,1218]);
line('#cbcbcb', 1.6, [1160,1245, 1190,1290, 1212,1312]);
line('#c4c4c4', 1, [1082,1216, 1100,1236, 1125,1265]);
line(WHITE, 1, [1270,1375, 1290,1388, 1292,1407]);
for (const [v, ...p] of [
  ['#c8c8c8',1505,530,1345,595],['#fafafa',1490,528,1440,550],['#d6d6d6',1500,550,1400,592],['#c4c4c4',1480,540,1370,580],
  ['#f6f6f6',1440,548,1370,570],['#c8c8c8',1440,560,1345,602],['#dcdcdc',1510,560,1430,592],['#fafafa',1425,562,1375,586],
  ['#c6c6c6',1430,515,1360,540]]) line(v, 1, p);
for (const p of [[1335,524],[1335,608],[1328,580],[1330,461]]) dither(2, p[0], p[1], p[0] + 20, p[1]);

// compression speckle: 8x8 blocks, [column, row, strength, density]
const img = c.getImageData(0, 0, 262, 178), d = img.data;
function speck(col, row, amp, den) {
  for (let y = row; y < row + 8; y++) for (let x = col; x < col + 8; x++) {
    if (x < 0 || y < 0 || x > 261 || y > 177) continue;
    const i = (y * 262 + x) * 4, v = d[i];
    let n = 0;
    if (v > 240) n = rnd() < den ? -amp * Math.pow(rnd(), 1.4) : rnd() * 1.5;
    else n = (rnd() - .5) * Math.min(amp, 30) * .6 + (rnd() < den * .1 ? amp * .5 : 0);
    d[i] = d[i + 1] = d[i + 2] = Math.max(170, Math.min(255, v + n));
  }
}
const blocks = [
  [23,-1,14,.2],[7,7,8,.3],[15,7,16,.3],[23,7,40,.25],[31,7,18,.2],[39,-1,50,.35],[39,7,45,.35],[39,15,36,.3],[-1,15,16,.2],[7,15,8,.2],
  [15,15,14,.2],[23,15,40,.25],[31,15,25,.25],[-1,23,50,.25],[31,23,20,.2],[39,23,20,.2],[-1,31,40,.25],
  [151,-1,30,.2],[159,-1,14,.2],[159,7,12,.3],[167,7,14,.1],[167,15,40,.25],[175,15,14,.3],[183,15,40,.2],[167,23,30,.2],
  [183,23,30,.3],[191,7,50,.2],[191,15,55,.35],[191,23,80,.3],[199,-1,60,.2],[199,7,70,.35],[199,15,80,.3],[207,-1,50,.3],
  [207,7,70,.3],[207,15,30,.1],[215,-1,12,.1],[183,31,24,.3],[191,31,70,.3],[183,39,40,.25],[191,39,12,.2],[183,47,40,.2],[191,47,30,.2],
  [199,47,70,.4],[207,47,70,.4],[183,55,30,.2],[191,55,50,.3],[199,55,60,.25],[207,55,50,.25],[215,55,20,.15],[223,55,12,.1],
  [191,63,14,.2],[199,63,60,.2],[207,63,60,.2],[215,63,20,.3],[215,71,8,.4],[223,79,14,.2],
  [135,127,10,.2],[143,127,40,.3],[151,127,30,.2],[143,135,40,.2],[151,135,30,.2],[143,143,15,.2],[151,143,20,.2],[159,143,20,.3],
  [151,151,40,.25],[159,151,60,.3],[167,151,30,.2],[159,159,40,.2],[167,159,60,.3],[175,159,40,.2],[167,167,70,.3],[175,167,50,.3],
  [159,167,8,.3],[183,167,35,.2],[191,159,10,.3],[199,151,8,.3],[207,127,50,.2],[199,135,20,.3],[207,135,25,.3],[199,143,12,.3],
  [215,127,12,.2],[-1,159,50,.25],[-1,167,70,.3],[7,151,20,.2],
  [7,159,45,.25],[7,167,60,.3],[15,151,20,.15],[15,159,35,.25],[15,167,55,.25],[23,159,35,.2],[23,167,25,.2],[-1,151,45,.2],
  [71,23,25,.3],[119,23,20,.35],[119,31,25,.3],[119,39,30,.35],[159,55,25,.35],[79,79,28,.3],[119,79,25,.25],[71,95,20,.3],
  [111,95,25,.35],[119,103,25,.25],[71,111,25,.3],[103,111,30,.3],[71,119,25,.3],[119,119,20,.3],[167,119,14,.2]];
for (const b of blocks) speck(...b);
c.putImageData(img, 0, 0);

// individual dark cells
function dots(v, p) {
  c.fillStyle = `rgb(${v},${v},${v})`;
  for (let i = 0; i < p.length; i += 2) c.fillRect(Math.floor(cx(p[i])), Math.floor(cy(p[i + 1])), 1, 1);
}
dots(198, [202,232, 208,239, 202,246, 195,239, 222,260, 215,267, 229,267, 222,274, 194,288, 208,309, 215,315, 299,288, 285,302, 306,232, 327,218, 341,211, 36,413, 55,420, 62,427, 41,441, 354,239, 354,309, 76,434, 243,302, 300,246]);
dots(205, [92,1300, 76,1305, 103,1312, 90,1298, 36,1326, 54,1334, 61,1341, 82,1341, 83,1326, 131,1334, 35,1347, 47,1347, 104,1354, 110,1347, 125,1347, 159,1354, 166,1340, 180,1347, 187,1333, 194,1326, 201,1312, 208,1333, 173,1354, 138,1361, 145,1368, 131,1368, 96,1368, 61,1382, 54,1389, 75,1382, 68,1389, 118,1389, 103,1389, 41,1396, 97,1396, 96,1403, 89,1403, 117,1389, 110,1396, 131,1382, 138,1382, 124,1382, 36,1403, 47,1403, 103,1403, 124,1270, 124,1277, 124,1264, 124,1290, 180,1298, 166,1382]);
dots(192, [1126,1255, 1133,1262, 1126,1269, 1140,1276, 1156,1297, 1163,1276, 1156,1283, 1148,1290, 1177,1297, 1184,1290, 1177,1276, 1065,1165, 1415,601, 1415,565, 1340,608, 1347,608, 1220,338, 1227,331, 1234,338, 1241,331, 1213,345, 1227,345, 1220,325, 1241,317, 1332,524, 1339,524, 1345,524, 1415,290, 1387,286]);

// walls
c.fillStyle = '#000';
for (const [x, y, w, h] of [[74,25,101,1],[74,125,101,1],[74,25,1,101],[174,25,1,101],[125,25,1,12],[125,46,1,80],
  [135,56,29,1],[87,85,38,1],[74,95,41,1],[95,105,30,1],[74,115,32,1]]) c.fillRect(x, y, w, h);
c.fillStyle = '#c8c8c8';
c.fillRect(125, 37, 1, 1);
// ringing beside the walls
c.fillStyle = '#fafafa';
for (const [x, y, w, h] of [[76,31,1,64],[72,31,1,64],[122,47,1,32],[122,87,1,16],[168,31,1,90],[170,31,1,90],[79,29,40,1],[127,29,40,1],
  [79,121,40,1],[79,123,40,1],[127,121,40,1],[127,123,40,1],[79,97,31,1],[79,99,31,1],[87,83,31,1],[87,81,31,1],
  [95,107,24,1],[95,109,24,1],[135,58,24,1],[135,60,24,1],[79,113,24,1]]) c.fillRect(x, y, w, h);

// flyout corner on each tool that has variants
for (const t of document.querySelectorAll('.tool:not(.plain)')) {
  const p = document.createElementNS('http://www.w3.org/2000/svg', 'path');
  p.setAttribute('d', 'M29 15.500V21H23.500Q28 20 29 15.500z');
  p.setAttribute('fill', '#c8c8c8');
  t.append(p);
}
```
